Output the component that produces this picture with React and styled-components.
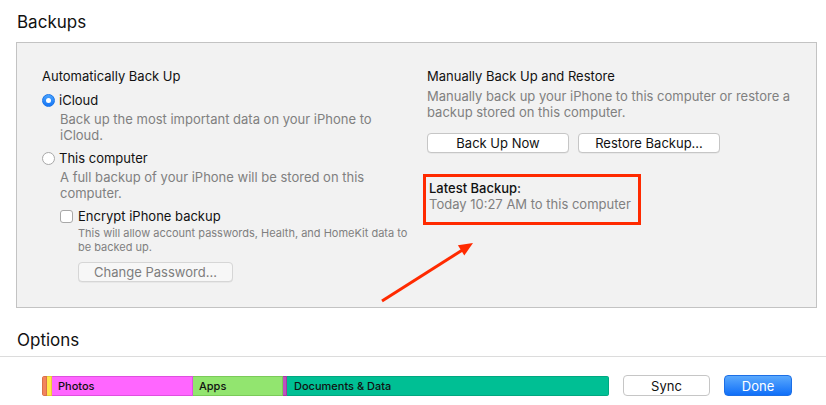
import React from 'react'
import styled, { createGlobalStyle } from 'styled-components'

const Global = createGlobalStyle`
  body {
    margin: 0;
    background: #ffffff;
    font-family: Inter, "Liberation Sans", Arial, sans-serif;
    color: #1a1a1a;
  }
`

const Page = styled.div`
  position: relative;
  width: 826px;
  height: 405px;
  overflow: hidden;
  padding-top: 12px;
  box-sizing: border-box;
`

const Heading = styled.h2`
  margin: ${({ top }) => top || 0}px 0 0 17px;
  font-size: 17px;
  line-height: 20px;
  font-weight: 400;
  color: #111;
`

const Panel = styled.div`
  margin: 10px 9px 0 16px;
  border: 1px solid #c3c3c3;
  background: #f2f2f2;
  padding: 25px 0 25px 25px;
  display: grid;
  grid-template-columns: 385px 1fr;
`

const Column = styled.div`
  display: flex;
  flex-direction: column;
  align-items: flex-start;
`

const Title = styled.div`
  font-size: 13px;
  line-height: 16px;
  font-weight: ${({ strong }) => (strong ? 500 : 400)};
  color: #111;
`

const Choice = styled.label`
  display: flex;
  align-items: center;
  gap: 4px;
  font-size: 13px;
  line-height: 16px;
  color: #111;
  margin-top: ${({ gap }) => gap}px;
  margin-left: ${({ indent }) => indent || 0}px;
`

const Radio = styled.span`
  width: 13px;
  height: 13px;
  border-radius: 50%;
  box-sizing: border-box;
  display: flex;
  align-items: center;
  justify-content: center;
  background: ${({ on }) => (on ? 'linear-gradient(#4aa3fd, #1676f6)' : '#fff')};
  border: 1px solid ${({ on }) => (on ? '#1a74e8' : '#a8a8a8')};
  &::after {
    content: '';
    width: 5px;
    height: 5px;
    border-radius: 50%;
    background: #fff;
    display: ${({ on }) => (on ? 'block' : 'none')};
  }
`

const Check = styled.span`
  width: 13px;
  height: 13px;
  border-radius: 3px;
  box-sizing: border-box;
  background: #fff;
  border: 1px solid #a8a8a8;
  margin-right: 1px;
`

const Note = styled.div`
  font-size: ${({ small }) => (small ? 11 : 13)}px;
  line-height: ${({ small }) => (small ? 14 : 16)}px;
  color: #808080;
  margin-top: ${({ gap }) => gap || 0}px;
  margin-left: ${({ indent }) => indent || 0}px;
`

const Button = styled.button`
  font-family: inherit;
  font-size: 13px;
  color: ${({ dim }) => (dim ? '#7d7d7d' : '#111')};
  height: 20px;
  width: ${({ w }) => w}px;
  padding: 0;
  background: ${({ dim }) => (dim ? '#f7f7f7' : '#fff')};
  border: 1px solid ${({ dim }) => (dim ? '#d6d6d6' : '#c6c6c6')};
  border-radius: 4px;
  box-shadow: 0 0.5px 0.5px rgba(0, 0, 0, 0.08);
`

const ButtonRow = styled.div`
  display: flex;
  gap: 9px;
  margin-top: ${({ gap }) => gap}px;
  margin-left: ${({ indent }) => indent || 0}px;
`

const Highlight = styled.div`
  margin: 21px 0 0 -4px;
  width: 206px;
  border: 3px solid #ff2a00;
  padding: 3px 3px 10px 3px;
`

const Divider = styled.div`
  height: 1px;
  background: #dcdcdc;
  margin-top: 6px;
`

const Footer = styled.div`
  display: flex;
  align-items: center;
  margin: 18px 0 0 42px;
`

const Storage = styled.div`
  display: flex;
  width: 567px;
  height: 20px;
  border-radius: 3px;
  overflow: hidden;
  margin-right: 14px;
`

const Segment = styled.div`
  width: ${({ w }) => w}px;
  flex: ${({ grow }) => (grow ? 1 : 'none')};
  background: ${({ c }) => c};
  box-sizing: border-box;
  border: 1px solid ${({ edge }) => edge};
  border-left-width: ${({ lead }) => (lead ? 1 : 0)}px;
  font-size: 11px;
  line-height: 18px;
  font-weight: 500;
  color: #111;
  padding-left: ${({ pad }) => pad || 0}px;
  white-space: nowrap;
`

const Action = styled.button`
  font-family: inherit;
  font-size: 13px;
  height: 21px;
  width: ${({ w }) => w}px;
  margin-right: 14px;
  padding: 0;
  border-radius: 4px;
  color: ${({ primary }) => (primary ? '#fff' : '#111')};
  background: ${({ primary }) => (primary ? 'linear-gradient(#5aa9fd, #106ff8)' : '#fff')};
  border: 1px solid ${({ primary }) => (primary ? '#1c6fe6' : '#c6c6c6')};
`

const Arrow = styled.svg`
  position: absolute;
  left: 0;
  top: 0;
  pointer-events: none;
`

const App = () => {
  const segments = [
    { w: 5, c: '#f2845c', edge: '#d9704a', lead: true },
    { w: 5, c: '#ffe74a', edge: '#e6cf35' },
    { w: 141, c: '#ff66ff', edge: '#df4fdf', label: 'Photos', pad: 6 },
    { w: 90, c: '#92e56f', edge: '#7acb58', label: 'Apps', pad: 6 },
    { w: 4, c: '#c04fbf', edge: '#a23ca2' },
    { grow: true, c: '#00bf94', edge: '#00a880', label: 'Documents & Data', pad: 7 },
  ]

  return (
    <Page>
      <Global />
      <Heading>Backups</Heading>
      <Panel>
        <Column>
          <Title>Automatically Back Up</Title>
          <Choice gap={8}>
            <Radio on />
            iCloud
          </Choice>
          <Note gap={3} indent={18}>
            Back up the most important data on your iPhone to
            <br />
            iCloud.
          </Note>
          <Choice gap={7}>
            <Radio />
            This computer
          </Choice>
          <Note gap={3} indent={18}>
            A full backup of your iPhone will be stored on this
            <br />
            computer.
          </Note>
          <Choice gap={7} indent={18}>
            <Check />
            Encrypt iPhone backup
          </Choice>
          <Note small gap={2} indent={36}>
            This will allow account passwords, Health, and HomeKit data to
            <br />
            be backed up.
          </Note>
          <ButtonRow gap={8} indent={36}>
            <Button dim w={155}>
              Change Password...
            </Button>
          </ButtonRow>
        </Column>
        <Column>
          <Title>Manually Back Up and Restore</Title>
          <Note gap={4}>
            Manually back up your iPhone to this computer or restore a
            <br />
            backup stored on this computer.
          </Note>
          <ButtonRow gap={13}>
            <Button w={142}>Back Up Now</Button>
            <Button w={142}>Restore Backup...</Button>
          </ButtonRow>
          <Highlight>
            <Title strong>Latest Backup:</Title>
            <Note>Today 10:27 AM to this computer</Note>
          </Highlight>
        </Column>
      </Panel>
      <Heading top={22}>Options</Heading>
      <Divider />
      <Footer>
        <Storage>
          {segments.map((s, i) => (
            <Segment key={i} {...s}>
              {s.label}
            </Segment>
          ))}
        </Storage>
        <Action w={87}>Sync</Action>
        <Action primary w={68}>
          Done
        </Action>
      </Footer>
      <Arrow width="826" height="405">
        <line x1="382" y1="301" x2="464" y2="249" stroke="#ff2a00" strokeWidth="3" />
        <polygon points="473,243 464.3,255.5 457.9,245.3" fill="#ff2a00" />
      </Arrow>
    </Page>
  )
}

export default App
